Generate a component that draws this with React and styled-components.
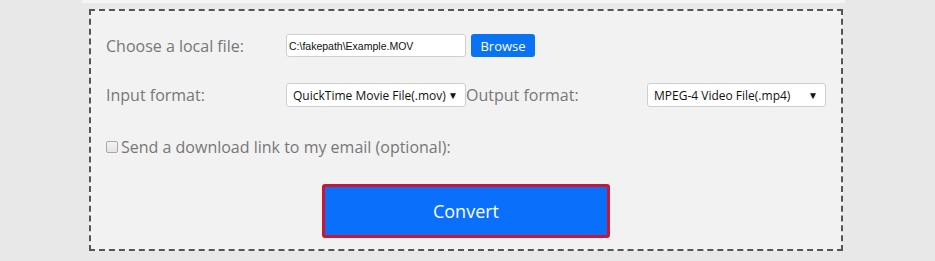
import React from "react";
import styled, { createGlobalStyle } from "styled-components";

const Global = createGlobalStyle`
  html, body { margin: 0; padding: 0; background: #e8e8e8; }
  body { font-family: "Open Sans", "Liberation Sans", sans-serif; }
`;

const Page = styled.div`
  width: 935px;
  height: 261px;
  overflow: hidden;
  background: #e8e8e8;
`;

const TopStrip = styled.div`
  margin-left: 82px;
  width: 763px;
  height: 3px;
  background: #f5f5f5;
`;

const Box = styled.div`
  box-sizing: border-box;
  margin: 6px 0 0 89px;
  width: 754px;
  height: 242px;
  border: 2px dashed #555;
  background: #f2f2f2;
  padding: 23px 0 0 15px;
  display: flex;
  flex-direction: column;
`;

const Row = styled.div`
  display: flex;
  align-items: center;
  height: ${(p) => p.$h}px;
  margin-top: ${(p) => p.$mt || 0}px;
`;

const Label = styled.span`
  width: ${(p) => p.$w || 180}px;
  flex: none;
  font-size: 16px;
  color: #777;
  white-space: nowrap;
`;

const TextInput = styled.div`
  box-sizing: border-box;
  width: 180px;
  height: 23px;
  background: #fff;
  border: 1px solid #cfcfcf;
  border-radius: 3px;
  display: flex;
  align-items: center;
  padding-left: 2px;
  font-family: "Liberation Sans", Arial, sans-serif;
  font-size: 10.5px;
  color: #111;
`;

const BrowseButton = styled.button`
  box-sizing: border-box;
  margin-left: 5px;
  width: 64px;
  height: 23px;
  border: none;
  border-radius: 3px;
  background: #0a73f3;
  color: #fff;
  font-family: "Open Sans", sans-serif;
  font-size: 13px;
  padding: 0;
`;

const Select = styled.div`
  box-sizing: border-box;
  width: ${(p) => p.$w || 180}px;
  height: 24px;
  flex: none;
  background: #fff;
  border: 1px solid #cfcfcf;
  border-radius: 3px;
  display: flex;
  align-items: center;
  justify-content: space-between;
  padding: 0 7px 0 6px;
  font-size: 12px;
  color: #111;
  white-space: nowrap;
`;

const Arrow = styled.span`
  font-size: 10px;
  color: #111;
  line-height: 1;
`;

const Check = styled.span`
  box-sizing: border-box;
  width: 12px;
  height: 12px;
  border: 1px solid #a8a8a8;
  border-radius: 2px;
  background: linear-gradient(#f4f4f4, #e4e4e4);
  margin-right: 3px;
  flex: none;
`;

const CheckText = styled.span`
  font-size: 16px;
  color: #777;
`;

const ConvertRow = styled.div`
  display: flex;
  justify-content: center;
  margin-top: 27px;
  margin-left: -15px;
`;

const ConvertButton = styled.button`
  box-sizing: border-box;
  width: 288px;
  height: 54px;
  border: 3px solid #cf1430;
  border-radius: 3px;
  background: #0a6ffb;
  color: #fff;
  font-family: "Open Sans", sans-serif;
  font-size: 18px;
  padding: 0;
`;

export default function App() {
  return (
    <Page>
      <Global />
      <TopStrip />
      <Box>
        <Row $h={23}>
          <Label>Choose a local file:</Label>
          <TextInput>C:\fakepath\Example.MOV</TextInput>
          <BrowseButton>Browse</BrowseButton>
        </Row>
        <Row $h={24} $mt={26}>
          <Label>Input format:</Label>
          <Select>
            <span>QuickTime Movie File(.mov)</span>
            <Arrow>▼</Arrow>
          </Select>
          <Label $w={181}>Output format:</Label>
          <Select $w={179}>
            <span>MPEG-4 Video File(.mp4)</span>
            <Arrow>▼</Arrow>
          </Select>
        </Row>
        <Row $h={20} $mt={30}>
          <Check />
          <CheckText>Send a download link to my email (optional):</CheckText>
        </Row>
        <ConvertRow>
          <ConvertButton>Convert</ConvertButton>
        </ConvertRow>
      </Box>
    </Page>
  );
}
